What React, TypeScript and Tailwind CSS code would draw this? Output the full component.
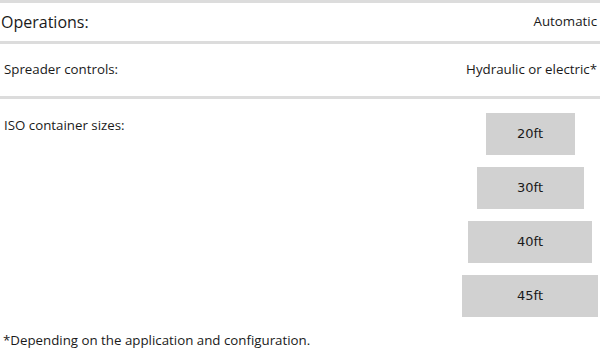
import React from "react";

const sizes = [
  { label: "20ft", w: "w-[89px]" },
  { label: "30ft", w: "w-[107px]" },
  { label: "40ft", w: "w-[124px]" },
  { label: "45ft", w: "w-[136px]" },
];

// Spec table for the spreader
export default function App() {
  return (
    <div className="w-[600px] h-[350px] bg-white text-[#1a1a1a] font-['Open_Sans',sans-serif] overflow-hidden">
      <div className="border-t-[3px] border-[#dcdcdc]" />

      {/* Operations */}
      <div className="flex justify-between items-center h-[41px] pl-px pr-[3px] border-b-[3px] border-[#dcdcdc]">
        <span className="text-[16px]">Operations:</span>
        <span className="text-[13.3px]">Automatic</span>
      </div>

      {/* Spreader controls */}
      <div className="flex justify-between items-center h-[55px] pl-1 pr-[3px] border-b-[3px] border-[#dcdcdc]">
        <span className="text-[13.3px]">Spreader controls:</span>
        <span className="text-[13.3px]">Hydraulic or electric*</span>
      </div>

      {/* Container sizes */}
      <div className="flex justify-between pl-1 pr-[2px] pt-[17px]">
        <span className="text-[13.3px] leading-[18px]">ISO container sizes:</span>
        <div className="w-[136px] flex flex-col items-center gap-[12px] -mt-[3px]">
          {sizes.map((s) => (
            <div
              key={s.label}
              className={`${s.w} h-[42px] bg-[#d1d1d1] flex items-center justify-center text-[13px] font-['DejaVu_Sans',sans-serif]`}
            >
              {s.label}
            </div>
          ))}
        </div>
      </div>

      <p className="mt-[14px] pl-[3px] text-[13.3px]">
        *Depending on the application and configuration.
      </p>
    </div>
  );
}
